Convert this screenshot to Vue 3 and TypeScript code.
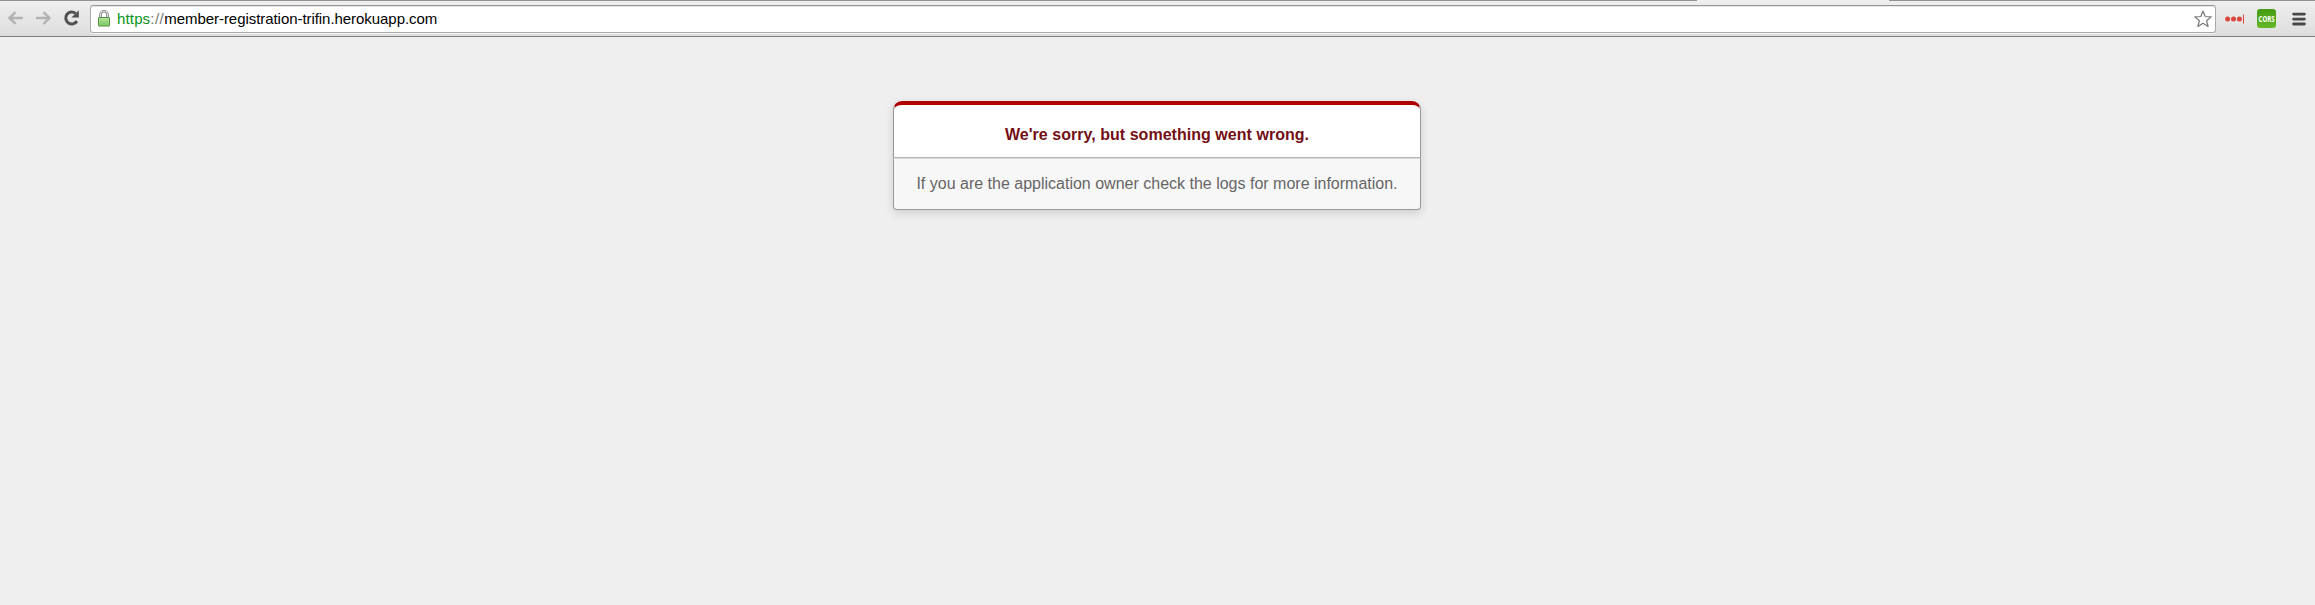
<script setup lang="ts">
const scheme: string = 'https'
const host: string = 'member-registration-trifin.herokuapp.com'
</script>

<template>
  <div class="window">
    <header class="toolbar">
      <div class="tab-edge"><i class="edge left"></i><i class="edge right"></i></div>
      <div class="controls">
        <svg class="nav" width="84" height="20" viewBox="0 0 84 20" fill="none">
          <g stroke="#b3b3b3" stroke-width="2.5">
            <path d="M14.800 10H1.500M7.500 4.200L1.500 10L7.500 15.800" />
            <path d="M28 10H41.500M35.500 4.200L41.500 10L35.500 15.800" />
          </g>
          <path d="M68.900 13.100A6 6 0 1 1 67.500 5.300" stroke="#505050" stroke-width="3" />
          <path d="M70.800 2.200V9.600H63.400Z" fill="#505050" />
        </svg>
        <div class="omnibox">
          <svg class="lock" width="12" height="17" viewBox="0 0 12 17">
            <defs>
              <linearGradient id="lock-body" x1="0" y1="0" x2="0" y2="1">
                <stop offset="0" stop-color="#b5e6a0" />
                <stop offset="1" stop-color="#7ac85f" />
              </linearGradient>
            </defs>
            <path d="M2.500 8V4.700a3.500 3.500 0 0 1 7 0V8" fill="none" stroke="#777" stroke-width="2.600" />
            <path d="M2.500 8V4.700a3.500 3.500 0 0 1 7 0V8" fill="none" stroke="#ddd" stroke-width="1.200" />
            <rect x=".5" y="7.500" width="11" height="8.500" rx=".5" fill="url(#lock-body)" stroke="#55923f" />
          </svg>
          <span class="url"><span class="scheme">{{ scheme }}</span><span class="slashes">://</span><span class="host">{{ host }}</span></span>
          <svg class="star" width="18" height="18" viewBox="0 0 18 18">
            <path d="M9 1L11.200 6.500L17.200 6.900L12.600 10.700L14.100 16.500L9 13.300L3.900 16.500L5.400 10.700L.8 6.900L6.800 6.500Z" fill="#fff" stroke="#777" stroke-width="1.200" stroke-linejoin="round" />
          </svg>
        </div>
        <svg class="dots" width="20" height="12" viewBox="0 0 20 12" fill="#db453b">
          <circle cx="2.600" cy="6" r="2.500" /><circle cx="8.500" cy="6" r="2.500" /><circle cx="14.400" cy="6" r="2.500" />
          <rect x="18" y="1.500" width="1" height="9" />
        </svg>
        <span class="cors"><span>CORS</span></span>
        <svg class="menu" width="14" height="14" viewBox="0 0 14 14" stroke="#484848" stroke-width="2.800" stroke-linecap="round">
          <path d="M1.600 2.100H12.400M1.600 7.100H12.400M1.600 12H12.400" />
        </svg>
      </div>
    </header>
    <main class="page">
      <div class="dialog">
        <h1>We're sorry, but something went wrong.</h1>
        <p>If you are the application owner check the logs for more information.</p>
      </div>
    </main>
  </div>
</template>

<style>
body { margin: 0; background: #efefef; }
</style>

<style scoped>
.window {
  height: 605px;
  overflow: hidden;
  background: #efefef;
  font-family: "Liberation Sans", Arial, sans-serif;
}
.toolbar {
  box-sizing: border-box;
  height: 37px;
  border-bottom: 1px solid #7e7e7e;
  background: linear-gradient(#efefef, #dedede);
}
.tab-edge { display: flex; justify-content: space-between; height: 1px; }
.edge { height: 1px; background: #929092; }
.left { width: 1697px; }
.right { width: 426px; }
.controls { display: flex; height: 35px; padding-left: 8px; }
.nav { flex: none; margin: 7px -2px 0 0; }
.omnibox {
  display: flex;
  box-sizing: border-box;
  width: 2126px;
  height: 28px;
  margin-top: 4px;
  border: 1px solid #aaa;
  border-top-color: #969696;
  border-radius: 3px;
  background: #fff;
  box-shadow: inset 0 1px 0 #e5e5e5, 0 1px 0 #f2f2f2;
}
.lock { margin: 4px 0 0 6.5px; }
.url {
  flex: 1;
  margin-left: 7.5px;
  color: #000;
  font-size: 15px;
  line-height: 26px;
  white-space: nowrap;
}
.scheme { color: #0a9420; letter-spacing: .15px; }
.slashes { color: #777; letter-spacing: .5px; }
.host { letter-spacing: -.055px; }
.star { margin: 4px 3.5px 0 0; }
.dots { margin: 12px 0 0 9px; }
.cors {
  display: flex;
  align-items: center;
  justify-content: center;
  width: 19px;
  height: 19px;
  margin: 8px 0 0 12px;
  border-radius: 3px;
  background: linear-gradient(#459b13, #65b925);
  color: #fff;
  font: bold 9.5px "Open Sans", sans-serif;
}
.cors span { transform: scaleX(.64); }
.menu { margin: 11px 0 0 16px; }
.page { padding-top: 64px; }
.dialog { width: 528px; margin: 0 auto 0 893px; text-align: center; }
h1 {
  box-sizing: border-box;
  height: 57px;
  margin: 0;
  padding-top: 18px;
  border: 1px solid #bbb;
  border-right-color: #999;
  border-left-color: #999;
  border-top: 4px solid #b00100;
  border-radius: 9px 9px 0 0;
  background: #fff;
  box-shadow: 0 3px 8px rgba(50, 50, 50, .17);
  color: #730e15;
  font-size: 16px;
  line-height: 24px;
  letter-spacing: .035px;
}
p {
  box-sizing: border-box;
  height: 52px;
  margin: 0;
  padding: 16px 0;
  border: 1px solid #999;
  border-top-color: #dadada;
  border-radius: 0 0 4px 4px;
  background: #f7f7f7;
  box-shadow: 0 3px 8px rgba(50, 50, 50, .17);
  color: #666;
  font-size: 16px;
  line-height: 18px;
}
</style>
